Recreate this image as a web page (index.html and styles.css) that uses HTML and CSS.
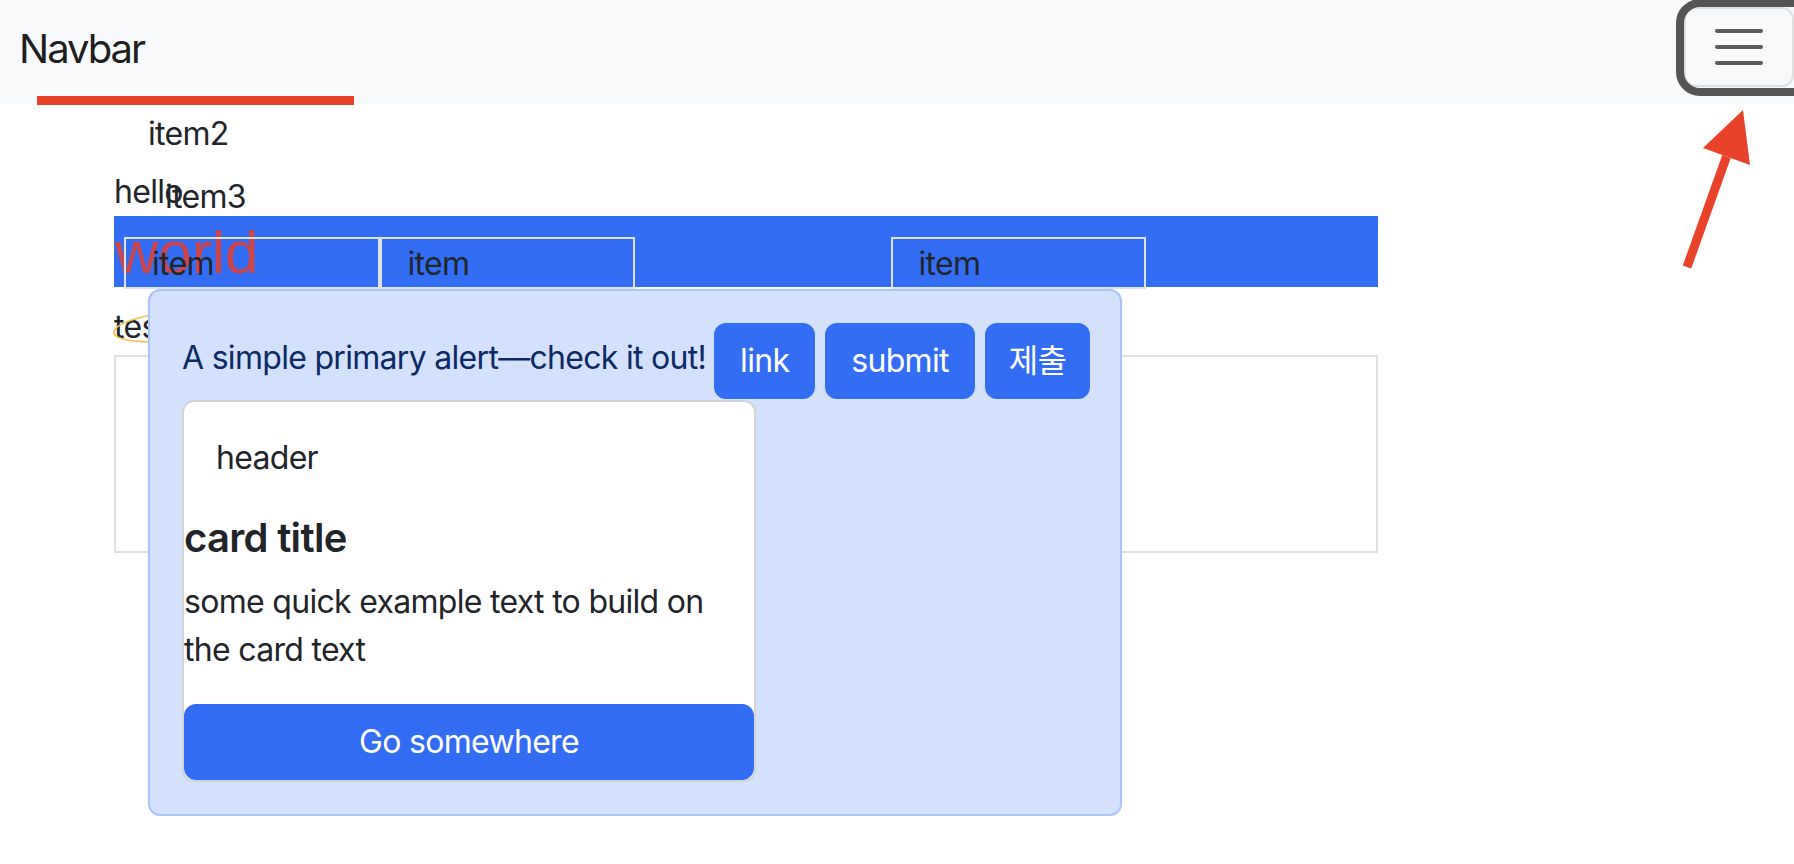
FILE: index.html
```html
<!DOCTYPE html>
<html lang="ko">
<head>
<meta charset="utf-8">
<title>Navbar</title>
<link rel="stylesheet" href="styles.css">
</head>
<body>
<nav class="navbar">
  <a class="brand">Navbar</a>
  <button class="toggler" type="button" aria-label="Toggle navigation">
    <svg class="toggler-icon" viewBox="0 0 30 30" width="60" height="60"><path d="M4 7h22M4 15h22M4 23h22" stroke="#595c5f" stroke-width="2" stroke-linecap="round" fill="none"/></svg>
  </button>
  <span class="nav-underline"></span>
  <span class="focus-ring"></span>
</nav>
<svg class="arrow" width="80" height="175" viewBox="0 0 80 175">
  <path d="M7 167 L46.5 56.5" stroke="#e8432a" stroke-width="9" fill="none"/>
  <polygon points="63,10 23,48 70,65" fill="#e8432a"/>
</svg>
<main class="page">
  <ul class="dropdown">
    <li>item2</li>
    <li class="shift">item3</li>
  </ul>
  <div class="hello">hello</div>
  <div class="bar">
    <span class="world">world</span>
    <div class="cells">
      <div class="cell">item</div>
      <div class="cell">item</div>
      <div class="cell empty"></div>
      <div class="cell">item</div>
    </div>
  </div>
  <div class="test">test
    <svg class="ring" width="130" height="40" viewBox="0 0 130 40"><path d="M60,2 C30,4 5,13 4,21 C3,28 22,32 60,31" fill="none" stroke="#f2c14e" stroke-width="1.5"/></svg>
  </div>
  <div class="box"></div>
  <div class="alert">
    <div class="alert-row">
      <span class="alert-text">A simple primary alert—check it out!</span>
      <a class="btn">link</a>
      <button class="btn" type="button">submit</button>
      <button class="btn kr" type="button">제출</button>
    </div>
    <div class="card">
      <div class="card-header">header</div>
      <div class="card-body">
        <h5 class="card-title">card title</h5>
        <p class="card-text">some quick example text to build on the card text</p>
        <a class="btn btn-block">Go somewhere</a>
      </div>
    </div>
  </div>
</main>
</body>
</html>
```

FILE: styles.css
```css
* { box-sizing: border-box; }
html { height: 100%; overflow: hidden; }
body {
  margin: 0;
  min-height: 100%;
  font-family: Inter, "Noto Sans", "Noto Sans CJK KR", sans-serif;
  font-size: 32px;
  line-height: 48px;
  letter-spacing: -0.7px;
  color: #212529;
  background: #fff;
}

.navbar {
  position: relative;
  height: 104px;
  background: #f8f9fa;
  display: flex;
  align-items: center;
  justify-content: space-between;
  padding: 7px 0 17px 19px;
}
.brand {
  font-size: 40px;
  line-height: 60px;
  letter-spacing: -2px;
  color: rgba(0, 0, 0, 0.9);
  margin-top: 3px;
}
.toggler {
  width: 110px;
  height: 80px;
  padding: 0;
  border: 2px solid rgba(0, 0, 0, 0.1);
  border-radius: 12px;
  background: transparent;
  display: flex;
  align-items: center;
  justify-content: center;
}
.toggler-icon { display: block; }
.nav-underline {
  position: absolute;
  left: 37px;
  top: 96px;
  width: 317px;
  height: 9px;
  background: #e8432a;
}
.focus-ring {
  position: absolute;
  left: 1676px;
  top: -1px;
  width: 140px;
  height: 97px;
  border: 8px solid #555555;
  border-radius: 24px;
}
.arrow {
  position: absolute;
  left: 1680px;
  top: 100px;
}

.page {
  position: relative;
  margin-left: 114px;
  width: 1264px;
  padding-top: 62px;
}
.dropdown {
  position: absolute;
  top: 6px;
  left: 34px;
  margin: 0;
  padding: 0;
  list-style: none;
  z-index: 2;
}
.dropdown li + li { margin-top: 15px; }
.dropdown .shift { padding-left: 17px; }

.hello { height: 50px; padding-top: 2px; }

.bar {
  position: relative;
  height: 71px;
  background: #336df4;
  padding: 21px 10px 0;
}
.world {
  position: absolute;
  left: 1px;
  top: 7px;
  font-family: "Liberation Sans", Arial, sans-serif;
  font-size: 60px;
  line-height: 60px;
  letter-spacing: 0;
  color: #cc464d;
}
.cells {
  position: relative;
  display: flex;
}
.cell {
  flex: 0 0 255.5px;
  height: 52px;
  border: 2px solid #dee2e6;
  padding: 1px 0 0 26px;
}
.cell.empty { border-color: transparent; }

.test {
  position: relative;
  margin-top: 15px;
  height: 48px;
  padding-top: 1px;
}
.ring {
  position: absolute;
  left: -4px;
  top: 9px;
}
.box {
  margin-top: 5px;
  height: 198px;
  border: 2px solid #dee2e6;
}

.alert {
  position: absolute;
  left: 34px;
  top: 185px;
  width: 974px;
  padding: 32px;
  background: #d3e1fc;
  border: 2px solid #a8c5f9;
  border-radius: 12px;
  color: #0b2a66;
}
.alert-row {
  display: flex;
  align-items: center;
  gap: 10px;
  white-space: nowrap;
}
.alert-text { padding-bottom: 6px; margin-right: -2px; }
.btn {
  display: inline-block;
  font: inherit;
  line-height: 48px;
  letter-spacing: inherit;
  color: #fff;
  background: #336df4;
  border: 2px solid #336df4;
  border-radius: 12px;
  padding: 12px 24px;
  text-align: center;
}
.btn.kr { padding: 12px 22px; }

.card {
  margin-top: 1px;
  width: 574px;
  background: #fff;
  border: 2px solid #d2d3d5;
  border-radius: 12px;
  color: #212529;
}
.card-header { padding: 32px; }
.card-title {
  margin: 0 0 16px;
  font-size: 40px;
  line-height: 48px;
  font-weight: 600;
}
.card-text { margin: 0 0 30px; }
.btn-block { display: block; width: 100%; }
```
